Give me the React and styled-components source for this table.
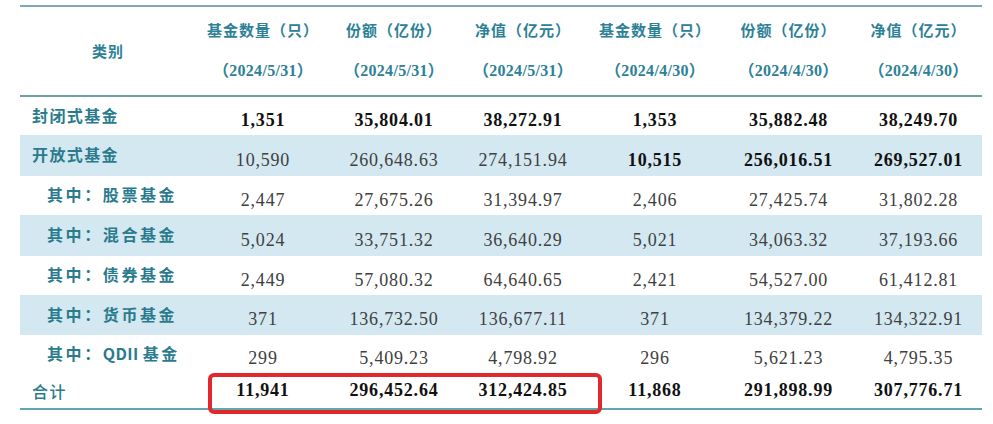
import React from "react";
import styled, { createGlobalStyle } from "styled-components";

const GlobalStyle = createGlobalStyle`
  html, body { margin: 0; padding: 0; background: #ffffff; }
  body { font-family: "Liberation Serif", "Noto Sans CJK SC", serif; }
`;

const COLS = "176px 134px 128px 130px 134px 133px 127px";

const Page = styled.div`
  width: 993px;
  height: 424px;
  box-sizing: border-box;
  padding: 5px 11px 0 20px;
  background: #fff;
  overflow: hidden;
`;

const Table = styled.div`
  position: relative;
  width: 962px;
  border-top: 2px solid #7ea8b5;
  border-bottom: 2px solid #5ea9b0;
`;

const HeaderRow = styled.div`
  display: grid;
  grid-template-columns: ${COLS};
  height: 88px;
  border-bottom: 2px solid #6f9fad;
`;

const HeadCell = styled.div`
  display: flex;
  flex-direction: column;
  align-items: center;
  justify-content: ${(p) => (p.$center ? "center" : "flex-start")};
  padding-top: ${(p) => (p.$center ? "0" : "13px")};
  gap: 21px;
  color: #2d8197;
  font-size: 15px;
  line-height: 20px;
  white-space: nowrap;
`;

const HeadLine = styled.span`
  font-family: ${(p) =>
    p.$date ? '"Liberation Serif", "Noto Sans CJK SC", serif' : '"Noto Sans CJK SC", sans-serif'};
  font-weight: 700;
  font-size: ${(p) => (p.$date ? "16px" : "15px")};
  letter-spacing: ${(p) => (p.$date ? "0.3px" : "1px")};
`;

const Row = styled.div`
  display: grid;
  grid-template-columns: ${COLS};
  height: ${(p) => p.$h}px;
  background: ${(p) => (p.$shade ? "#d3e8f0" : "#ffffff")};
  align-items: center;
`;

const Label = styled.div`
  padding-left: ${(p) => (p.$sub ? "27px" : "12px")};
  color: #2a7b8d;
  font-family: "Noto Sans CJK SC", sans-serif;
  font-weight: ${(p) => (p.$light ? 500 : 700)};
  font-size: 16px;
  letter-spacing: ${(p) => (p.$sub ? "2.6px" : "1.4px")};
  white-space: nowrap;
  margin-bottom: ${(p) => (p.$flat ? "0" : "3px")};
`;

const Latin = styled.span`
  letter-spacing: 0.4px;
  margin-right: 4px;
`;

const Num = styled.div`
  text-align: center;
  font-family: "Liberation Serif", serif;
  font-size: 18px;
  letter-spacing: 0.8px;
  font-weight: ${(p) => (p.$bold ? 700 : 400)};
  color: ${(p) => (p.$bold ? "#111111" : "#404040")};
  margin-top: ${(p) => (p.$flat ? "0" : "9px")};
  white-space: nowrap;
`;

const Highlight = styled.div`
  position: absolute;
  left: 188px;
  top: 366px;
  width: 394px;
  height: 41px;
  box-sizing: border-box;
  border: 4px solid #e2282c;
  border-radius: 6px;
  pointer-events: none;
`;

const headers = [
  ["基金数量（只）", "（2024/5/31）"],
  ["份额（亿份）", "（2024/5/31）"],
  ["净值（亿元）", "（2024/5/31）"],
  ["基金数量（只）", "（2024/4/30）"],
  ["份额（亿份）", "（2024/4/30）"],
  ["净值（亿元）", "（2024/4/30）"],
];

const rows = [
  { label: "封闭式基金", h: 38, vals: ["1,351", "35,804.01", "38,272.91", "1,353", "35,882.48", "38,249.70"], bold: [1, 1, 1, 1, 1, 1] },
  { label: "开放式基金", h: 41, shade: true, vals: ["10,590", "260,648.63", "274,151.94", "10,515", "256,016.51", "269,527.01"], bold: [0, 0, 0, 1, 1, 1] },
  { label: "其中：股票基金", sub: true, h: 39, vals: ["2,447", "27,675.26", "31,394.97", "2,406", "27,425.74", "31,802.28"] },
  { label: "其中：混合基金", sub: true, h: 41, shade: true, vals: ["5,024", "33,751.32", "36,640.29", "5,021", "34,063.32", "37,193.66"] },
  { label: "其中：债券基金", sub: true, h: 39, vals: ["2,449", "57,080.32", "64,640.65", "2,421", "54,527.00", "61,412.81"] },
  { label: "其中：货币基金", sub: true, h: 40, shade: true, vals: ["371", "136,732.50", "136,677.11", "371", "134,379.22", "134,322.91"] },
  { label: "其中：", latin: "QDII", rest: "基金", sub: true, h: 38, vals: ["299", "5,409.23", "4,798.92", "296", "5,621.23", "4,795.35"] },
  { label: "合计", h: 35, flat: true, light: true, vals: ["11,941", "296,452.64", "312,424.85", "11,868", "291,898.99", "307,776.71"], bold: [1, 1, 1, 1, 1, 1] },
];

export default function App() {
  return (
    <>
      <GlobalStyle />
      <Page>
        <Table>
          <HeaderRow>
            <HeadCell $center>
              <HeadLine>类别</HeadLine>
            </HeadCell>
            {headers.map(([a, b], i) => (
              <HeadCell key={i}>
                <HeadLine>{a}</HeadLine>
                <HeadLine $date>{b}</HeadLine>
              </HeadCell>
            ))}
          </HeaderRow>
          {rows.map((r, idx) => (
            <Row key={idx} $h={r.h} $shade={r.shade}>
              <Label $sub={r.sub} $flat={r.flat} $light={r.light}>
                {r.label}
                {r.latin && <Latin>{r.latin}</Latin>}
                {r.rest}
              </Label>
              {r.vals.map((v, i) => (
                <Num key={i} $bold={r.bold ? r.bold[i] : 0} $flat={r.flat}>
                  {v}
                </Num>
              ))}
            </Row>
          ))}
          <Highlight />
        </Table>
      </Page>
    </>
  );
}
